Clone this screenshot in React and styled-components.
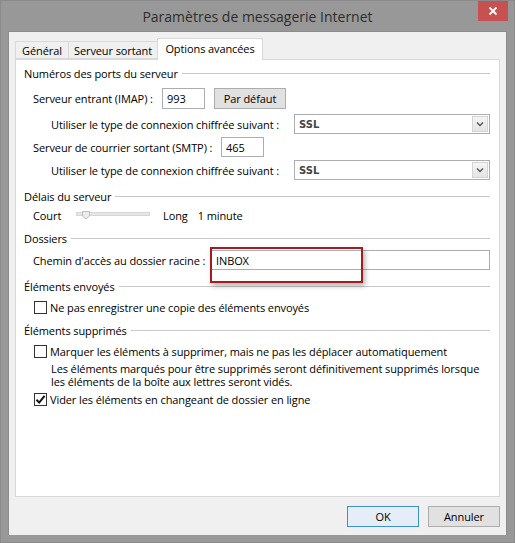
import React from 'react';
import styled, { createGlobalStyle } from 'styled-components';

const GlobalStyle = createGlobalStyle`
    body {
        margin: 0;
        background: #fff;
        font-family: "Open Sans", "Noto Sans", sans-serif;
        font-size: 11px;
        letter-spacing: -0.1px;
        color: #000;
    }
`;

const Window = styled.div`
    position: relative;
    width: 515px;
    height: 543px;
    box-sizing: border-box;
    background: #989898;
    border: 1px solid #8a8a8a;
    padding: 0 7px 7px 7px;
    display: flex;
    flex-direction: column;
`;

const TitleBar = styled.div`
    height: 30px;
    display: flex;
    align-items: center;
    justify-content: center;
    font-size: 14px;
    letter-spacing: 0;
    color: #2e2e2e;
`;

const CloseButton = styled.div`
    position: absolute;
    top: 0;
    right: 6px;
    width: 30px;
    height: 20px;
    background: #c75050;
    display: flex;
    align-items: center;
    justify-content: center;
`;

const Client = styled.div`
    flex: 1;
    background: #f0f0f0;
    border: 1px solid #8c8c8c;
    border-bottom: none;
    padding: 6px 6px 0 6px;
    display: flex;
    flex-direction: column;
`;

const TabRow = styled.div`
    height: 21px;
    display: flex;
    align-items: flex-end;
    position: relative;
    z-index: 1;
`;

const Tab = styled.div`
    box-sizing: border-box;
    width: ${p => p.$width}px;
    height: ${p => (p.$active ? 22 : 18)}px;
    margin-bottom: ${p => (p.$active ? -1 : 0)}px;
    margin-right: -1px;
    background: ${p => (p.$active ? '#fff' : '#f0f0f0')};
    border: 1px solid #d9d9d9;
    border-bottom: ${p => (p.$active ? 'none' : '1px solid #d9d9d9')};
    display: flex;
    align-items: center;
    justify-content: center;
    padding-bottom: ${p => (p.$active ? 3 : 0)}px;
`;

const Panel = styled.div`
    flex: 1;
    background: #fff;
    border: 1px solid #d9d9d9;
    padding: 3px 9px 0 8px;
    display: flex;
    flex-direction: column;
`;

const Heading = styled.div`
    height: 20px;
    margin-top: ${p => p.$top || 0}px;
    display: flex;
    align-items: center;

    &::after {
        content: "";
        flex: 1;
        height: 1px;
        background: #c8c8c8;
        margin-left: 4px;
    }
`;

const Row = styled.div`
    position: relative;
    height: ${p => p.$height || 20}px;
    margin-top: ${p => p.$top || 0}px;
    padding-left: ${p => p.$indent || 0}px;
    display: flex;
    align-items: center;
    white-space: nowrap;
`;

const Label = styled.span`
    width: ${p => (p.$width ? `${p.$width}px` : 'auto')};
    flex-shrink: 0;
`;

const TextBox = styled.div`
    box-sizing: border-box;
    width: ${p => (p.$width ? `${p.$width}px` : 'auto')};
    flex: ${p => (p.$width ? '0 0 auto' : '1')};
    height: ${p => p.$height || 20}px;
    border: 1px solid #abadb3;
    background: #fff;
    padding-left: 4px;
    display: flex;
    align-items: center;
`;

const Button = styled.div`
    box-sizing: border-box;
    width: 72px;
    height: 21px;
    margin-left: ${p => p.$gap || 0}px;
    border: 1px solid ${p => (p.$primary ? '#3c8fd1' : '#adadad')};
    background: ${p => (p.$primary ? '#e5eef6' : '#e1e1e1')};
    display: flex;
    align-items: center;
    justify-content: center;
`;

const Select = styled.div`
    box-sizing: border-box;
    width: 196px;
    height: 20px;
    margin-left: auto;
    border: 1px solid #abadb3;
    background: #fff;
    display: flex;
    align-items: center;
    padding: 1px;
`;

const SelectValue = styled.span`
    flex: 1;
    padding-left: 3px;
    font-family: "DejaVu Sans", sans-serif;
    font-size: 10px;
    font-weight: bold;
    letter-spacing: 0;
    color: #444;
`;

const SelectArrow = styled.div`
    width: 16px;
    height: 16px;
    box-sizing: border-box;
    border: 1px solid #d4d4d4;
    background: linear-gradient(#f4f4f4, #e4e4e4);
    display: flex;
    align-items: center;
    justify-content: center;
`;

const SliderTrack = styled.div`
    margin: 0 13px 0 10px;
    width: 74px;
    height: 12px;
    display: flex;
`;

const Spaced = styled.span`
    margin-left: ${p => p.$gap}px;
`;

const Box = styled.div`
    box-sizing: border-box;
    width: 13px;
    height: 13px;
    border: 1px solid #333;
    background: #fff;
    margin: 0 3px 0 1px;
    display: flex;
    align-items: center;
    justify-content: center;
`;

const Note = styled.div`
    margin-top: 1px;
    padding-left: 27px;
    line-height: 13px;
    height: 26px;
    white-space: nowrap;
`;

// red frame drawn over the root folder field
const Highlight = styled.div`
    position: absolute;
    left: 186px;
    top: -3px;
    width: 153px;
    height: 36px;
    box-sizing: border-box;
    border: 2px solid #a01d22;
    box-shadow: 2px 3px 5px rgba(0, 0, 0, 0.3);
    pointer-events: none;
`;

const Footer = styled.div`
    height: 38px;
    display: flex;
    justify-content: flex-end;
    padding-top: 9px;
    box-sizing: border-box;
`;

const Checkbox = ({ checked, children, top }) => (
    <Row $indent={9} $top={top}>
        <Box>
            {checked && (
                <svg width="11" height="11" viewBox="0 0 11 11">
                    <path d="M1.5 5.8 L4.2 8.6 L9.6 1.8" fill="none" stroke="#111" strokeWidth="2" />
                </svg>
            )}
        </Box>
        <span>{children}</span>
    </Row>
);

const Dropdown = ({ value }) => (
    <Select>
        <SelectValue>{value}</SelectValue>
        <SelectArrow>
            <svg width="8" height="6" viewBox="0 0 8 6">
                <path d="M1 1.5 L4 4.5 L7 1.5" fill="none" stroke="#555" strokeWidth="1.4" />
            </svg>
        </SelectArrow>
    </Select>
);

const App = () => {
    return (
        <>
            <GlobalStyle />
            <Window>
                <TitleBar>Paramètres de messagerie Internet</TitleBar>
                <CloseButton>
                    <svg width="10" height="10" viewBox="0 0 10 10">
                        <path d="M1.5 1.5 L8.5 8.5 M8.5 1.5 L1.5 8.5" stroke="#fff" strokeWidth="1.8" />
                    </svg>
                </CloseButton>
                <Client>
                    <TabRow>
                        <Tab $width={54}>Général</Tab>
                        <Tab $width={90}>Serveur sortant</Tab>
                        <Tab $width={106} $active>Options avancées</Tab>
                    </TabRow>
                    <Panel>
                        <Heading>Numéros des ports du serveur</Heading>
                        <Row $indent={9} $top={5} $height={21}>
                            <Label $width={129}>Serveur entrant (IMAP) :</Label>
                            <TextBox $width={43} $height={21}>993</TextBox>
                            <Button $gap={9}>Par défaut</Button>
                        </Row>
                        <Row $indent={27} $top={5}>
                            <Label>Utiliser le type de connexion chiffrée suivant :</Label>
                            <Dropdown value="SSL" />
                        </Row>
                        <Row $indent={9} $top={3}>
                            <Label $width={188}>Serveur de courrier sortant (SMTP) :</Label>
                            <TextBox $width={43}>465</TextBox>
                        </Row>
                        <Row $indent={27} $top={3}>
                            <Label>Utiliser le type de connexion chiffrée suivant :</Label>
                            <Dropdown value="SSL" />
                        </Row>

                        <Heading $top={6}>Délais du serveur</Heading>
                        <Row $indent={9} $height={18}>
                            <Label $width={33}>Court</Label>
                            <SliderTrack>
                                <svg width="74" height="12" viewBox="0 0 74 12">
                                    <rect x="0.5" y="3.5" width="73" height="3" fill="#e6e6e6" stroke="#d6d6d6" />
                                    <path d="M6.5 2.5 H13.5 V7 L10 10 L6.5 7 Z" fill="#ececec" stroke="#bcbcbc" />
                                </svg>
                            </SliderTrack>
                            <span>Long</span>
                            <Spaced $gap={10}>1 minute</Spaced>
                        </Row>

                        <Heading $top={4}>Dossiers</Heading>
                        <Row $indent={9} $top={2}>
                            <Label $width={178}>Chemin d'accès au dossier racine :</Label>
                            <TextBox>INBOX</TextBox>
                            <Highlight />
                        </Row>

                        <Heading $top={6}>Éléments envoyés</Heading>
                        <Checkbox top={1}>Ne pas enregistrer une copie des éléments envoyés</Checkbox>

                        <Heading $top={3}>Éléments supprimés</Heading>
                        <Checkbox top={1}>Marquer les éléments à supprimer, mais ne pas les déplacer automatiquement</Checkbox>
                        <Note>
                            Les éléments marqués pour être supprimés seront définitivement supprimés lorsque
                            <br />
                            les éléments de la boîte aux lettres seront vidés.
                        </Note>
                        <Checkbox top={1} checked>Vider les éléments en changeant de dossier en ligne</Checkbox>
                    </Panel>
                    <Footer>
                        <Button $primary>OK</Button>
                        <Button $gap={9}>Annuler</Button>
                    </Footer>
                </Client>
            </Window>
        </>
    );
};

export default App;
